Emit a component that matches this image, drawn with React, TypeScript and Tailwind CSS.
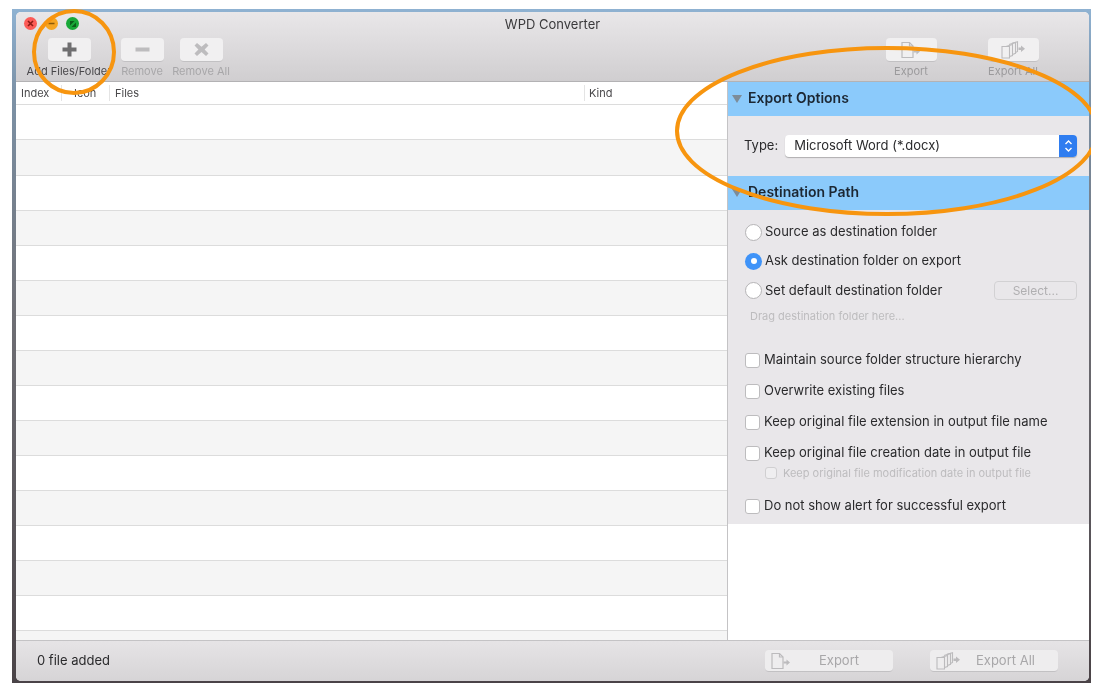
import React from "react";

const font = { fontFamily: 'Inter, "Liberation Sans", sans-serif' };

function Plus() {
  return (
    <svg width="15" height="15" viewBox="0 0 15 15"><path d="M5.500 0.500h4v5h5v4h-5v5h-4v-5h-5v-4h5z" fill="#6f6e70" /></svg>
  );
}
function Minus() {
  return (
    <svg width="15" height="15" viewBox="0 0 15 15"><rect x="0.500" y="5.500" width="14" height="4" fill="#bdbcbe" /></svg>
  );
}
function Cross() {
  return (
    <svg width="15" height="15" viewBox="0 0 15 15"><path d="M3 1l4.500 3.800L12 1l2.500 2.600L10.600 7.500l3.900 4L12 14l-4.500-3.900L3 14 .5 11.500l3.900-4L.5 3.600z" fill="#bdbcbe" /></svg>
  );
}
function DocIcon() {
  return (
    <svg width="20" height="18" viewBox="0 0 20 18" fill="none" stroke="#bcbbbd" strokeWidth="1.2">
      <path d="M1 1.500h7.500l3.500 3.500v11.500H1z" />
      <path d="M8.500 1.500v3.500H12" />
      <path d="M12.500 9.500h3v-2l3.500 3-3.500 3v-2h-3z" fill="#bcbbbd" stroke="none" />
    </svg>
  );
}
function DocsIcon() {
  return (
    <svg width="25" height="18" viewBox="0 0 25 18" fill="none" stroke="#bcbbbd" strokeWidth="1.1">
      <path d="M1 5.500h7.500v11.500H1z" />
      <path d="M8.500 15.500l3-1V3.500L5 5.500" />
      <path d="M11.500 13.500l3-1.200V1.500L8 3.600" />
      <path d="M14.500 11.500l2-1V.8L11 2.400" />
      <path d="M17.500 6.500h2.500v-2l4 3.200-4 3.200v-2h-2.500z" fill="#bcbbbd" stroke="none" />
    </svg>
  );
}

function ToolButton({ icon, label, w, bw, labelColor }: { icon: React.ReactNode; label: string; w: string; bw: string; labelColor: string }) {
  return (
    <div className={`flex flex-col items-center ${w}`}>
      <div className={`${bw} h-[24px] rounded-[4px] bg-[#f1f0f1] border-b border-b-[#c2c1c3] flex items-center justify-center`}>{icon}</div>
      <span className={`mt-[2px] text-[11px] leading-[14px] whitespace-nowrap ${labelColor}`}>{label}</span>
    </div>
  );
}

function SectionHeader({ title }: { title: string }) {
  return (
    <div className="h-[34px] bg-[#8bcafb] flex items-center pl-[4px] gap-[6px] shrink-0">
      <svg width="10" height="8" viewBox="0 0 10 8"><path d="M0 0h10L5 8z" fill="#7d8c99" /></svg>
      <span className="text-[14px] font-semibold text-[#1c2733] leading-none mb-[3px]">{title}</span>
    </div>
  );
}

function Radio({ checked, label }: { checked?: boolean; label: string }) {
  return (
    <div className="flex items-center gap-[3px] h-[18px]">
      {checked ? (
        <span className="w-[17px] h-[17px] rounded-full bg-[#3f93f8] flex items-center justify-center">
          <span className="w-[6px] h-[6px] rounded-full bg-white" />
        </span>
      ) : (
        <span className="w-[17px] h-[17px] rounded-full bg-white border border-[#b5b4b6]" />
      )}
      <span className="text-[13px] text-[#2a2a2c] whitespace-nowrap">{label}</span>
    </div>
  );
}

function Check({ label }: { label: string }) {
  return (
    <div className="flex items-center gap-[4px] h-[16px]">
      <span className="w-[15px] h-[15px] rounded-[3px] bg-white border border-[#bdbcbe]" />
      <span className="text-[13px] text-[#2a2a2c] whitespace-nowrap">{label}</span>
    </div>
  );
}

const rowHeights = [35, 36, 35, 35, 35, 35, 35, 35, 35, 35, 35, 35, 35, 35, 35, 10];

export default function App() {
  return (
    <div className="relative w-[1095px] h-[690px] bg-white overflow-hidden blur-[0.35px]" style={font}>
      <div className="absolute left-[12px] top-[9px] w-[1079px] h-[674px] bg-[linear-gradient(to_bottom,#8fb2d2_0%,#7d93a8_12%,#6f6f75_45%,#4a4347_100%)]" />
      <div className="relative pt-[12px] pl-[16px]">
        <div className="w-[1073px] h-[669px] rounded-[5px] overflow-hidden flex flex-col bg-white">
          {/* Toolbar */}
          <div className="relative h-[70px] shrink-0 bg-[linear-gradient(to_bottom,#e9e7e9,#d0ced0)] border-b border-b-[#b3b2b4] px-[8px] pt-[5px]">
            <div className="flex items-center gap-[8px] h-[13px]">
              <span className="w-[13px] h-[13px] rounded-full bg-[#fc5b57] flex items-center justify-center">
                <svg width="7" height="7" viewBox="0 0 7 7" stroke="#8c1a14" strokeWidth="1.600"><path d="M1 1l5 5M6 1l-5 5" /></svg>
              </span>
              <span className="w-[13px] h-[13px] rounded-full bg-[#f5a623] flex items-center justify-center">
                <svg width="7" height="7" viewBox="0 0 7 7" stroke="#8a5a08" strokeWidth="1.400"><path d="M0.500 3.500h6" /></svg>
              </span>
              <span className="w-[13px] h-[13px] rounded-full bg-[#19a838] flex items-center justify-center">
                <svg width="8" height="8" viewBox="0 0 8 8" fill="#0b5e1c"><path d="M1 1h4.500L1 5.500zM7 7H2.500L7 2.500z" /></svg>
              </span>
            </div>
            <div className="absolute left-0 right-0 top-[4px] text-center text-[13px] text-[#3a393b] leading-[16px]">WPD Converter</div>
            <div className="flex mt-[8px] items-start">
              <ToolButton icon={<Plus />} label="Add Files/Folder" w="w-[90px]" bw="w-[43px]" labelColor="text-[#48474a]" />
              <ToolButton icon={<Minus />} label="Remove" w="w-[56px]" bw="w-[43px]" labelColor="text-[#a8a7a9]" />
              <ToolButton icon={<Cross />} label="Remove All" w="w-[62px]" bw="w-[43px]" labelColor="text-[#a8a7a9]" />
              <div className="flex-1" />
              <ToolButton icon={<DocIcon />} label="Export" w="w-[60px]" bw="w-[51px]" labelColor="text-[#9b9a9c]" />
              <ToolButton icon={<DocsIcon />} label="Export All" w="w-[60px] ml-[42px] mr-[38px]" bw="w-[51px]" labelColor="text-[#9b9a9c]" />
            </div>
          </div>

          {/* Middle */}
          <div className="flex h-[558px] shrink-0">
            <div className="w-[711px] flex flex-col shrink-0">
              <div className="h-[23px] flex items-center text-[11px] text-[#4a494b] border-b border-b-[#dcdcdc] shrink-0">
                <span className="w-[46px] pl-[5px] border-r border-r-[#e4e4e4]">Index</span>
                <span className="w-[48px] pl-[12px] border-r border-r-[#e4e4e4]">Icon</span>
                <span className="w-[475px] pl-[5px] border-r border-r-[#e4e4e4]">Files</span>
                <span className="pl-[4px]">Kind</span>
              </div>
              {rowHeights.map((h, i) => (
                <div
                  key={i}
                  style={{ height: h }}
                  className={`shrink-0 border-b border-b-[#dcdcdc] ${i % 2 === 0 ? "bg-white" : "bg-[#f5f5f5]"}`}
                />
              ))}
            </div>
            <div className="w-[1px] bg-[#c4c3c5] shrink-0" />
            <div className="flex-1 flex flex-col bg-white">
              <SectionHeader title="Export Options" />
              <div className="h-[60px] bg-[#e9e7ea] flex items-center pl-[16px] pr-[12px] gap-[7px] shrink-0">
                <span className="text-[13px] text-[#2a2a2c]">Type:</span>
                <div className="flex-1 h-[22px] rounded-[4px] bg-white shadow-[0_1px_1px_rgba(0,0,0,0.25)] flex items-center justify-between pl-[9px] overflow-hidden">
                  <span className="text-[13px] text-[#2a2a2c]">Microsoft Word (*.docx)</span>
                  <span className="w-[18px] h-full bg-[#2f7df0] flex items-center justify-center">
                    <svg width="9" height="14" viewBox="0 0 9 14" fill="none" stroke="white" strokeWidth="1.400"><path d="M1.500 5L4.500 2l3 3M1.500 9l3 3 3-3" /></svg>
                  </span>
                </div>
              </div>
              <SectionHeader title="Destination Path" />
              <div className="h-[314px] bg-[#e9e7ea] shrink-0 pl-[17px] pr-[12px] pt-[13px] flex flex-col">
                <Radio label="Source as destination folder" />
                <div className="mt-[11px]"><Radio checked label="Ask destination folder on export" /></div>
                <div className="mt-[11px] flex items-center justify-between">
                  <Radio label="Set default destination folder" />
                  <div className="w-[83px] h-[19px] rounded-[4px] border border-[#d2d1d3] text-[12px] text-[#b0afb1] flex items-center justify-center">Select...</div>
                </div>
                <div className="mt-[9px] pl-[5px] text-[11px] leading-[14px] text-[#bdbcbe]">Drag destination folder here...</div>
                <div className="mt-[29px] flex flex-col">
                  <Check label="Maintain source folder structure hierarchy" />
                  <div className="mt-[15px]"><Check label="Overwrite existing files" /></div>
                  <div className="mt-[15px]"><Check label="Keep original file extension in output file name" /></div>
                  <div className="mt-[15px]"><Check label="Keep original file creation date in output file" /></div>
                  <div className="mt-[5px] pl-[20px] flex items-center gap-[6px] h-[14px]">
                    <span className="w-[12px] h-[12px] rounded-[3px] border border-[#d0cfd1] bg-[#efeef0]" />
                    <span className="text-[11px] text-[#bdbcbe] whitespace-nowrap">Keep original file modification date in output file</span>
                  </div>
                  <div className="mt-[18px]"><Check label="Do not show alert for successful export" /></div>
                </div>
              </div>
            </div>
          </div>

          {/* Footer */}
          <div className="flex-1 bg-[linear-gradient(to_bottom,#e6e4e6,#d6d4d6)] border-t border-t-[#c4c3c5] flex items-center pl-[21px] pr-[31px]">
            <span className="text-[13px] text-[#2a2a2c]">0 file added</span>
            <div className="flex-1" />
            <div className="w-[128px] h-[22px] rounded-[4px] bg-[#eeedee] border-b border-b-[#c2c1c3] flex items-center pl-[6px]">
              <DocIcon />
              <span className="ml-[28px] text-[13px] text-[#a8a7a9]">Export</span>
            </div>
            <div className="ml-[37px] w-[128px] h-[22px] rounded-[4px] bg-[#eeedee] border-b border-b-[#c2c1c3] flex items-center pl-[6px]">
              <DocsIcon />
              <span className="ml-[15px] text-[13px] text-[#a8a7a9]">Export All</span>
            </div>
          </div>
        </div>
      </div>

      {/* Annotations */}
      <svg className="absolute left-0 top-0 pointer-events-none overflow-hidden" width="1091" height="690" viewBox="0 0 1091 690" fill="none" stroke="#f7950f" strokeWidth="4">
        <ellipse cx="74" cy="52" rx="40" ry="41" />
        <ellipse cx="887" cy="131" rx="210" ry="83" />
      </svg>
    </div>
  );
}
